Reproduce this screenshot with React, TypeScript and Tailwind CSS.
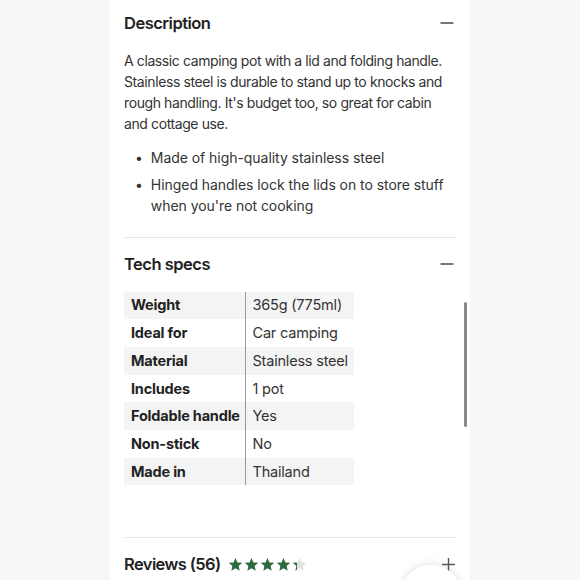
const specs: [string, string][] = [
  ["Weight", "365g (775ml)"],
  ["Ideal for", "Car camping"],
  ["Material", "Stainless steel"],
  ["Includes", "1 pot"],
  ["Foldable handle", "Yes"],
  ["Non-stick", "No"],
  ["Made in", "Thailand"],
];

function Star({ fill }: { fill: number }) {
  // fill: 0..1, portion of the star coloured green
  const id = `star-${fill}`;
  return (
    <svg width="15" height="15" viewBox="0 0 24 24">
      <defs>
        <linearGradient id={id}>
          <stop offset={`${fill * 100}%`} stopColor="#2d6a3b" />
          <stop offset={`${fill * 100}%`} stopColor="#e2e2e2" />
        </linearGradient>
      </defs>
      <path
        d="M12 1.5l3.1 7.1 7.7.7-5.8 5.1 1.7 7.6L12 18l-6.7 4 1.7-7.6L1.2 9.3l7.7-.7z"
        fill={`url(#${id})`}
      />
    </svg>
  );
}

function MinusIcon() {
  return (
    <svg width="14" height="14" viewBox="0 0 14 14" className="mr-[2px] text-[#555]">
      <line x1="0.5" y1="7" x2="13.5" y2="7" stroke="currentColor" strokeWidth="1.6" />
    </svg>
  );
}

function PlusIcon() {
  return (
    <svg width="13" height="13" viewBox="0 0 13 13" className="mr-[1px] text-[#555]">
      <line x1="0" y1="6.5" x2="13" y2="6.5" stroke="currentColor" strokeWidth="1.4" />
      <line x1="6.5" y1="0" x2="6.5" y2="13" stroke="currentColor" strokeWidth="1.4" />
    </svg>
  );
}

function App() {
  return (
    <div className="min-h-screen bg-[#f7f7f7] font-['Inter',sans-serif] text-[#222]">
      <div className="relative mx-auto h-[580px] w-[360px] overflow-hidden bg-white px-[14px]">
        {/* Description */}
        <section className="pb-[21px]">
          <div className="flex items-center justify-between pt-[11px]">
            <h2 className="text-[16.5px] font-semibold tracking-[-0.5px] text-[#222]">Description</h2>
            <MinusIcon />
          </div>
          <p className="mt-[14px] text-[14px] leading-[21px] tracking-[-0.4px] text-[#333]">
            A classic camping pot with a lid and folding handle. Stainless steel is durable to stand
            up to knocks and rough handling. It's budget too, so great for cabin and cottage use.
          </p>
          <ul className="mt-[13px] flex flex-col gap-[6px] pl-[11px] text-[14px] leading-[21px] tracking-[-0.05px] text-[#333]">
            <li className="flex gap-[8px]">
              <span>•</span>
              <span>Made of high-quality stainless steel</span>
            </li>
            <li className="flex gap-[8px]">
              <span>•</span>
              <span>Hinged handles lock the lids on to store stuff when you're not cooking</span>
            </li>
          </ul>
        </section>

        <div className="h-px bg-[#e6e6e6]" />

        {/* Tech specs */}
        <section className="pb-[52px]">
          <div className="flex items-center justify-between pt-[14px]">
            <h2 className="text-[16.5px] font-semibold tracking-[-0.5px] text-[#222]">Tech specs</h2>
            <MinusIcon />
          </div>
          <table className="mt-[15px] border-collapse text-[14.5px] tracking-[-0.2px] text-[#333]">
            <tbody>
              {specs.map(([k, v], i) => (
                <tr key={k} className={i % 2 === 0 ? "bg-[#f4f4f4]" : ""}>
                  <td className="h-[27.7px] w-[121px] whitespace-nowrap border-r-[1.5px] border-[#9a9a9a] pl-[7px] pr-[4px] font-bold text-[#222]">
                    {k}
                  </td>
                  <td className="h-[27.7px] w-[109px] whitespace-nowrap pl-[7px] pr-[6px]">{v}</td>
                </tr>
              ))}
            </tbody>
          </table>
        </section>

        <div className="h-px bg-[#e6e6e6]" />

        {/* Reviews */}
        <div className="flex items-center justify-between pt-[14px]">
          <div className="flex items-center gap-[7px]">
            <h2 className="text-[16.5px] font-semibold tracking-[-0.6px] text-[#222]">Reviews (56)</h2>
            <div className="flex gap-[1px]">
              <Star fill={1} />
              <Star fill={1} />
              <Star fill={1} />
              <Star fill={1} />
              <Star fill={0.3} />
            </div>
          </div>
          <PlusIcon />
        </div>

        {/* scroll indicator */}
        <div className="absolute right-[3px] top-[302px] h-[125px] w-[3px] rounded-full bg-[#8a8a8a]" />

        {/* floating round button */}
        <div className="absolute left-[290px] top-[565px] h-[62px] w-[62px] rounded-full bg-white shadow-[0_0_10px_rgba(0,0,0,0.14)]" />
      </div>
    </div>
  );
}

export default App;
